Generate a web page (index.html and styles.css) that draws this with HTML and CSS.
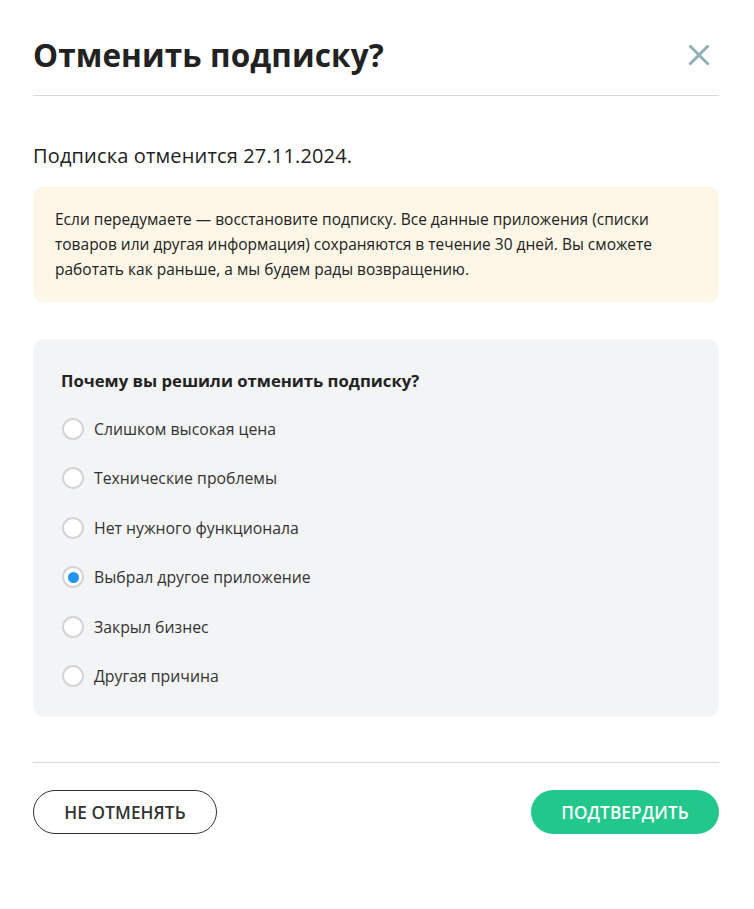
FILE: index.html
```html
<!DOCTYPE html>
<html lang="ru">
<head>
<meta charset="utf-8">
<link rel="stylesheet" href="styles.css">
</head>
<body>
<div class="modal">
  <header class="head">
    <h1 class="title">Отменить подписку?</h1>
    <button class="close" aria-label="Закрыть">
      <svg width="22" height="22" viewBox="0 0 22 22"><path d="M1.5 1.5 L20.5 20.5 M20.5 1.5 L1.5 20.5" stroke="#8fb0b7" stroke-width="3" fill="none"/></svg>
    </button>
  </header>
  <div class="body">
    <p class="lead">Подписка отменится 27.11.2024.</p>
    <div class="notice">Если передумаете — восстановите подписку. Все данные приложения (списки товаров или другая информация) сохраняются в течение 30 дней. Вы сможете работать как раньше, а мы будем рады возвращению.</div>
    <div class="survey">
      <h2 class="q">Почему вы решили отменить подписку?</h2>
      <ul class="opts">
        <li class="opt"><span class="radio"></span>Слишком высокая цена</li>
        <li class="opt"><span class="radio"></span>Технические проблемы</li>
        <li class="opt"><span class="radio"></span>Нет нужного функционала</li>
        <li class="opt"><span class="radio on"></span>Выбрал другое приложение</li>
        <li class="opt"><span class="radio"></span>Закрыл бизнес</li>
        <li class="opt"><span class="radio"></span>Другая причина</li>
      </ul>
    </div>
  </div>
  <footer class="foot">
    <button class="btn ghost">НЕ ОТМЕНЯТЬ</button>
    <button class="btn primary">ПОДТВЕРДИТЬ</button>
  </footer>
</div>
</body>
</html>
```
FILE: styles.css
```css
* { box-sizing: border-box; }
html, body { margin: 0; padding: 0; background: #fff; }
body { font-family: "Open Sans", "Noto Sans", sans-serif; color: #222; }
.modal { padding: 0 35px 0 33px; }
.head {
  display: flex; align-items: center; justify-content: space-between;
  height: 96px; border-bottom: 1px solid #d9d9d9;
  padding-top: 14px;
}
.title { margin: 0; font-size: 31.5px; font-weight: 700; color: #222; letter-spacing: 0.1px; }
.close { background: none; border: 0; padding: 0; width: 22px; height: 22px; margin-right: 9px; cursor: pointer; display: flex; }
.body { padding-top: 48px; }
.lead { margin: 0 0 19px; font-size: 20px; line-height: 24px; color: #222; letter-spacing: 0.15px; }
.notice {
  background: #fef6e6; border-radius: 10px;
  padding: 20px 22px 20px 22px;
  font-size: 15.5px; line-height: 25px; color: #222;
}
.survey {
  margin-top: 37px; background: #f3f4f6; border-radius: 12px;
  padding: 29px 28px 16px 28px;
}
.q { margin: 0 0 10px; font-size: 16.7px; font-weight: 700; line-height: 26px; color: #222; }
.opts { list-style: none; margin: 0; padding: 0; display: flex; flex-direction: column; gap: 0; }
.opt { display: flex; align-items: center; height: 49.5px; font-size: 15.8px; color: #333; }
.radio {
  width: 22px; height: 22px; border-radius: 50%;
  border: 2px solid #d4d4d4; background: #fff;
  margin: 0 10px 0 1px; display: flex; align-items: center; justify-content: center;
}
.radio.on::after { content: ""; width: 11px; height: 11px; border-radius: 50%; background: #2196f3; }
.foot {
  margin-top: 45px; border-top: 1px solid #d9d9d9;
  display: flex; justify-content: space-between; padding-top: 27px;
}
.btn {
  height: 44px; border-radius: 22px; font-family: "Open Sans", sans-serif;
  font-size: 17.2px; font-weight: 600; letter-spacing: 0.1px; cursor: pointer;
}
.ghost { width: 184px; background: #fff; border: 1px solid #333; color: #333; }
.primary { width: 188px; background: #22c78b; border: 0; color: #fff; }
```
